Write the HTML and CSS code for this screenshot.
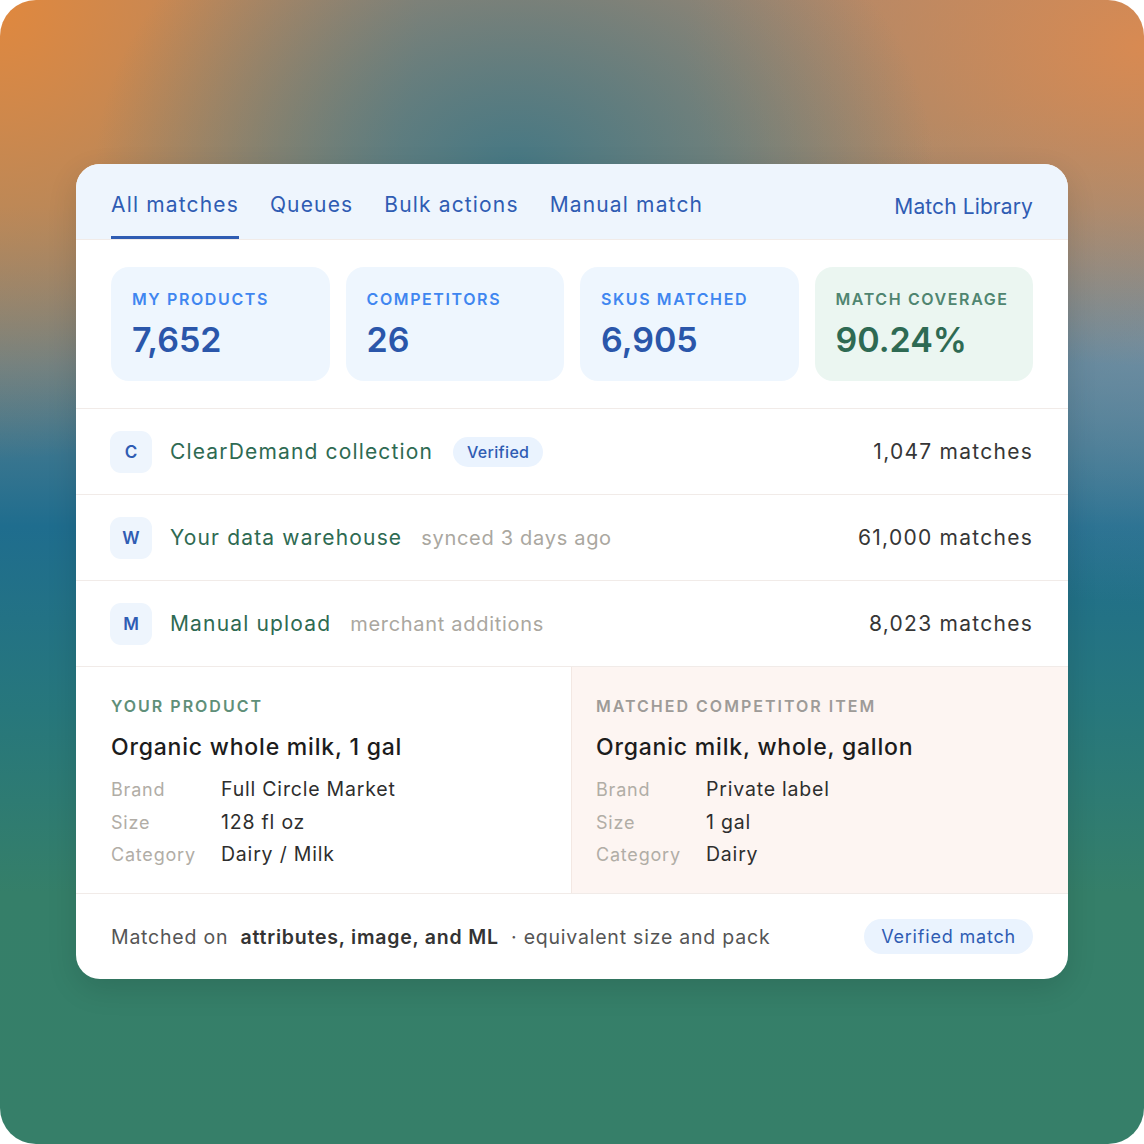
FILE: index.html
```html
<!doctype html>
<html lang="en">
<head>
  <meta charset="UTF-8" />
  <meta name="viewport" content="width=device-width, initial-scale=1.0" />
  <title>Match Library</title>
  <link rel="stylesheet" href="styles.css">
</head>
<body>
  <div class="backdrop">
    <main class="panel">
      <nav class="tabs">
        <a href="#" class="tab active">All matches</a>
        <a href="#" class="tab">Queues</a>
        <a href="#" class="tab">Bulk actions</a>
        <a href="#" class="tab">Manual match</a>
        <a href="#" class="tab library">Match Library</a>
      </nav>

      <section class="stats">
        <div class="stat">
          <div class="stat-label">My products</div>
          <div class="stat-value">7,652</div>
        </div>
        <div class="stat">
          <div class="stat-label">Competitors</div>
          <div class="stat-value">26</div>
        </div>
        <div class="stat">
          <div class="stat-label">SKUs matched</div>
          <div class="stat-value">6,905</div>
        </div>
        <div class="stat coverage">
          <div class="stat-label">Match coverage</div>
          <div class="stat-value">90.24%</div>
        </div>
      </section>

      <ul class="sources">
        <li class="source">
          <span class="source-icon">C</span>
          <span class="source-name">ClearDemand collection</span>
          <span class="pill">Verified</span>
          <span class="source-count">1,047 matches</span>
        </li>
        <li class="source">
          <span class="source-icon">W</span>
          <span class="source-name">Your data warehouse</span>
          <span class="source-note">synced 3 days ago</span>
          <span class="source-count">61,000 matches</span>
        </li>
        <li class="source">
          <span class="source-icon">M</span>
          <span class="source-name">Manual upload</span>
          <span class="source-note">merchant additions</span>
          <span class="source-count">8,023 matches</span>
        </li>
      </ul>

      <section class="compare">
        <div class="item mine">
          <div class="item-label">Your product</div>
          <h2 class="item-title">Organic whole milk, 1 gal</h2>
          <dl class="attrs">
            <dt>Brand</dt><dd>Full Circle Market</dd>
            <dt>Size</dt><dd>128 fl oz</dd>
            <dt>Category</dt><dd>Dairy / Milk</dd>
          </dl>
        </div>
        <div class="item theirs">
          <div class="item-label">Matched competitor item</div>
          <h2 class="item-title">Organic milk, whole, gallon</h2>
          <dl class="attrs">
            <dt>Brand</dt><dd>Private label</dd>
            <dt>Size</dt><dd>1 gal</dd>
            <dt>Category</dt><dd>Dairy</dd>
          </dl>
        </div>
      </section>

      <footer class="summary">
        <p>Matched on <strong>attributes, image, and ML</strong> · equivalent size and pack</p>
        <span class="pill large">Verified match</span>
      </footer>
    </main>
  </div>
</body>
</html>
```

FILE: styles.css
```css
* {
  margin: 0;
  padding: 0;
  box-sizing: border-box;
}

html, body {
  width: 1144px;
  height: 1144px;
  background: #fff;
  font-family: Inter, "Noto Sans", Arial, sans-serif;
  letter-spacing: 0.05em;
}

.backdrop {
  width: 1144px;
  height: 1144px;
  border-radius: 36px;
  padding: 164px 76px 0;
  background:
    radial-gradient(ellipse 420px 330px at 45% 15%, rgba(60, 118, 134, 0.9), rgba(60, 118, 134, 0) 100%),
    radial-gradient(ellipse 420px 460px at 0% 0%, #e0883e, rgba(224, 136, 62, 0) 100%),
    radial-gradient(ellipse 460px 320px at 100% 4%, #d88a52, rgba(216, 138, 82, 0) 100%),
    radial-gradient(ellipse 380px 260px at 100% 30%, rgba(118, 148, 172, 0.6), rgba(118, 148, 172, 0) 100%),
    linear-gradient(180deg, #a78870 0%, #938874 18%, #5a8090 32%, #1f6d8e 46%, #27777c 62%, #357f69 78%, #367f69 100%);
}

.panel {
  background: #fff;
  border-radius: 24px;
  overflow: hidden;
  box-shadow: 0 10px 30px rgba(0, 0, 0, 0.12);
}

/* top tab bar */
.tabs {
  display: flex;
  align-items: flex-end;
  gap: 31px;
  height: 76px;
  padding: 0 35px;
  background: #eef5fd;
  border-bottom: 1px solid #f1ebe8;
}

.tab {
  font-size: 21px;
  letter-spacing: 0.055em;
  color: #2f5cb3;
  text-decoration: none;
  padding-bottom: 19px;
  border-bottom: 3px solid transparent;
}

.tab.active {
  border-bottom-color: #2f5cb3;
}

.tab.library {
  margin-left: auto;
  padding-bottom: 17px;
  letter-spacing: 0.005em;
}

/* stat cards */
.stats {
  display: grid;
  grid-template-columns: repeat(4, 1fr);
  gap: 16px;
  padding: 27px 35px 27px;
  border-bottom: 1px solid #f1ebe8;
}

.stat {
  height: 114px;
  padding: 22px 21px;
  border-radius: 18px;
  background: #eef6fe;
  letter-spacing: 0;
}

.stat-label {
  font-size: 16px;
  font-weight: 600;
  letter-spacing: 1.6px;
  text-transform: uppercase;
  color: #3f86f0;
}

.stat-value {
  margin-top: 10px;
  font-size: 34px;
  font-weight: 600;
  color: #2a56aa;
}

.stat.coverage {
  background: #ebf6f1;
}

.stat.coverage .stat-label {
  color: #4f8570;
}

.stat.coverage .stat-value {
  color: #2e6a53;
}

/* source rows */
.sources {
  list-style: none;
}

.source {
  display: flex;
  align-items: center;
  height: 86px;
  padding: 0 35px 0 34px;
  border-bottom: 1px solid #f1ebe8;
}

.source-icon {
  width: 42px;
  height: 42px;
  display: flex;
  justify-content: center;
  align-items: center;
  border-radius: 11px;
  background: #eef5fd;
  color: #2f5cb3;
  font-size: 17px;
  font-weight: 600;
  letter-spacing: 0;
}

.source-name {
  margin-left: 18px;
  font-size: 21px;
  letter-spacing: 0.055em;
  color: #2e6a52;
}

.source-note {
  margin-left: 19px;
  font-size: 20px;
  letter-spacing: 0.035em;
  color: #aaa7a0;
}

.source-count {
  margin-left: auto;
  font-size: 21px;
  letter-spacing: 0.06em;
  color: #363636;
}

.pill {
  margin-left: 20px;
  padding: 5px 14px;
  border-radius: 16px;
  background: #eaf3fe;
  color: #2f5cb3;
  font-size: 16px;
  font-weight: 500;
  letter-spacing: 0.02em;
}

.pill.large {
  padding: 7px 17px;
  border-radius: 18px;
  font-size: 18px;
  font-weight: 400;
  letter-spacing: 0.045em;
}

/* product comparison */
.compare {
  display: grid;
  grid-template-columns: 495px 1fr;
  border-bottom: 1px solid #f1ebe8;
}

.item {
  height: 226px;
  padding: 29px 35px 0;
}

.item.theirs {
  background: #fdf5f2;
  border-left: 1px solid #f3e8e3;
  padding-left: 24px;
}

.item-label {
  font-size: 16px;
  font-weight: 600;
  letter-spacing: 2px;
  text-transform: uppercase;
  color: #5f8f79;
}

.theirs .item-label {
  color: #9e9b98;
}

.item-title {
  margin-top: 17px;
  font-size: 23px;
  font-weight: 500;
  color: #1c1c1c;
}

.attrs {
  display: grid;
  grid-template-columns: 110px 1fr;
  row-gap: 8.5px;
  margin-top: 16px;
  align-items: baseline;
}

.attrs dt {
  font-size: 18px;
  color: #b1ada6;
}

.attrs dd {
  font-size: 19.5px;
  color: #2e2e2e;
}

/* footer summary */
.summary {
  display: flex;
  align-items: center;
  height: 85px;
  padding: 0 35px;
}

.summary p {
  font-size: 19.5px;
  letter-spacing: 0.04em;
  color: #555;
}

.summary strong {
  margin: 0 6px;
  font-weight: 600;
  color: #333;
}

.summary .pill {
  margin-left: auto;
}
```
